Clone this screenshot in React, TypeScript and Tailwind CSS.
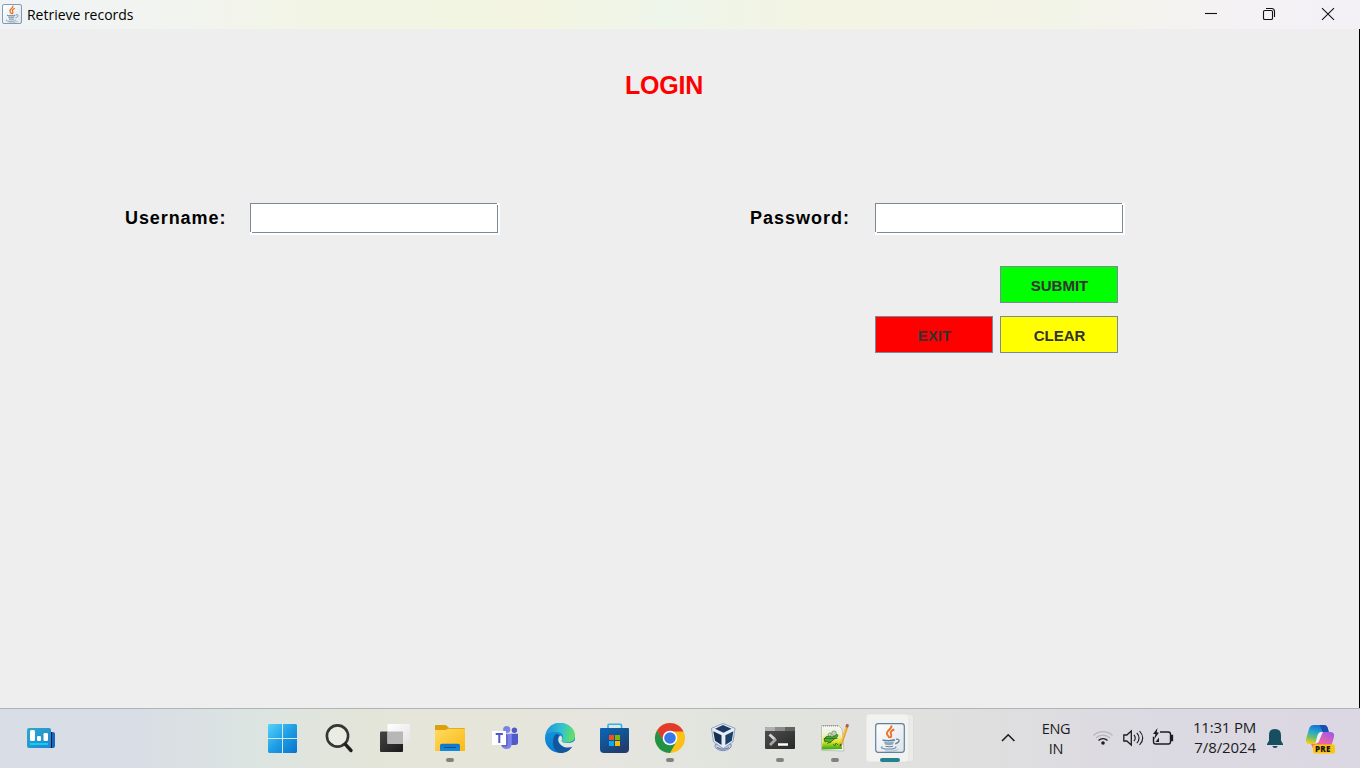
import React from "react";

function JavaCup({ className, viewBox = "875 723 30 30" }: { className?: string; viewBox?: string }) {
  return (
    <svg className={className} viewBox={viewBox}>
      <defs>
        <linearGradient id="cupBox" x1="0" y1="0" x2="1" y2="1">
          <stop offset="0" stopColor="#ffffff" />
          <stop offset="1" stopColor="#dfe3e8" />
        </linearGradient>
      </defs>
      <rect x="875.7" y="723.7" width="28.6" height="28.6" rx="2.5" fill="url(#cupBox)" stroke="#5d819f" strokeWidth="1.2" />
      <path d="M891.3 725.500c1.200 3.500-4.800 4.500-4.500 8 .2 1.800 2 2.500 2.500 4.500M894.300 729.500c-3 1.200-4.500 2.700-3.300 4.500.8 1.400.5 2.500-.7 4" fill="none" stroke="#ec7024" strokeWidth="1.900" />
      <path d="M882.500 739.800c2 1.200 10 1.200 12.500 0" fill="none" stroke="#5d819f" strokeWidth="1.500" />
      <path d="M884 741.500c2 1 7.500 1 10 0l-1 3q-4 1.300-8 0z" fill="#8ea7bb" />
      <path d="M896 739.200c4.500-.8 4 3.300-.8 4.600" fill="none" stroke="#5d819f" strokeWidth="1.200" />
      <path d="M885.500 746.300q3.500 1 7.500 0" fill="none" stroke="#5d819f" strokeWidth="1" />
      <path d="M882.500 746.500c-3.500 1.500 1 2.600 6 2.600 5.500 0 8.500-1.200 7-2.600" fill="none" stroke="#7d9ab2" strokeWidth="1.200" />
      <path d="M885 750.800c5 .7 11 .3 13.500-1.800" fill="none" stroke="#92aabd" strokeWidth=".8" />
    </svg>
  );
}

function Slot({ x, children }: { x: number; children: React.ReactNode }) {
  return (
    <svg className="h-[59px] w-[55px] shrink-0" viewBox={`${x} 709 55 59`}>
      {children}
    </svg>
  );
}

function RunningDot({ x }: { x: number }) {
  return <rect x={x - 4} y="758" width="8" height="4" rx="2" fill="#82827f" />;
}

function TaskIcons() {
  return (
    <div className="flex">
      <Slot x={258}>
        <defs>
          <linearGradient id="win" gradientUnits="userSpaceOnUse" x1="268" y1="724" x2="297" y2="753">
            <stop offset="0" stopColor="#55d3fb" />
            <stop offset=".5" stopColor="#1e9ee5" />
            <stop offset="1" stopColor="#0873cf" />
          </linearGradient>
        </defs>
        <path d="M269 724h13v14h-14v-13zM283 724h13l1 1v13h-14zM268 739h14v14h-13l-1-1zM283 739h14v13l-1 1h-13z" fill="url(#win)" />
      </Slot>
      <Slot x={313}>
        <circle cx="337.500" cy="736" r="10.600" fill="#f4f5ef" fillOpacity=".45" stroke="#343434" strokeWidth="2.600" />
        <path d="M345.200 744.200l5.800 6.300" stroke="#202020" strokeWidth="3.400" strokeLinecap="round" />
      </Slot>
      <Slot x={368}>
        <defs>
          <linearGradient id="tvDark" x1="0" y1="0" x2="1" y2="1">
            <stop offset="0" stopColor="#454545" />
            <stop offset="1" stopColor="#1a1a1a" />
          </linearGradient>
          <linearGradient id="tvLight" x1="0" y1="0" x2="1" y2="1">
            <stop offset="0" stopColor="#ffffff" />
            <stop offset="1" stopColor="#e3e3e3" />
          </linearGradient>
        </defs>
        <rect x="380" y="731.500" width="23" height="20.500" rx="1" fill="url(#tvDark)" />
        <rect x="387.500" y="724" width="22.500" height="20" rx="1" fill="url(#tvLight)" />
        <path d="M387.500 731.500H403V744h-15.500z" fill="#b7b7b7" />
      </Slot>
      <Slot x={423}>
        <defs>
          <linearGradient id="folder" x1="0" y1="0" x2="1" y2="1">
            <stop offset="0" stopColor="#ffda61" />
            <stop offset="1" stopColor="#fbb914" />
          </linearGradient>
          <linearGradient id="tray" x1="0" y1="0" x2="0" y2="1">
            <stop offset="0" stopColor="#1274c5" />
            <stop offset="1" stopColor="#148be0" />
          </linearGradient>
        </defs>
        <path d="M435 726q0-1 1-1h9q1 0 2 1l2 2h15q1 0 1 1v6h-30z" fill="#dda00d" />
        <path d="M435 730h10.500l2.500-1.200h17V751h-30z" fill="url(#folder)" />
        <path d="M440 751v-5.500q0-1.800 1.800-1.800h16.400q1.800 0 1.800 1.800v5.500z" fill="url(#tray)" />
        <path d="M444 747.500h12" stroke="#0b4f91" />
        <RunningDot x={450} />
      </Slot>
      <Slot x={478}>
        <circle cx="514.400" cy="730.300" r="2.700" fill="#5059c9" />
        <path d="M511 733.800h7v8.700q0 2.500-3 2.500h-4z" fill="#5059c9" />
        <circle cx="506.700" cy="729.500" r="3.600" fill="#7b83eb" />
        <path d="M502 733.800h9.800V743q0 6-5.500 6-4 0-5-4z" fill="#7b83eb" />
        <path d="M506 734.500l1 .8v10.500h-5.500" fill="none" stroke="#454b99" strokeWidth=".8" />
        <rect x="492" y="731" width="14" height="14" fill="#fff" />
        <path d="M495.700 734h7.200M499.300 734v9" stroke="#5059c9" strokeWidth="2" />
      </Slot>
      <Slot x={533}>
        <defs>
          <linearGradient id="edgeTop" gradientUnits="userSpaceOnUse" x1="548" y1="732" x2="574" y2="737">
            <stop offset="0" stopColor="#239bdd" />
            <stop offset=".5" stopColor="#31c4ce" />
            <stop offset="1" stopColor="#67e15d" />
          </linearGradient>
          <linearGradient id="edgeLeft" gradientUnits="userSpaceOnUse" x1="555" y1="731" x2="557" y2="753">
            <stop offset="0" stopColor="#1493d6" />
            <stop offset="1" stopColor="#0878d4" />
          </linearGradient>
        </defs>
        <circle cx="560" cy="738" r="15" fill="url(#edgeLeft)" />
        <path d="M545.500 734.500C548 726 553 723 560 723c9 0 15 6 15 12.500 0 5-4 7-8 7-4.500 0-6-1.500-5.200-2.500 2.700-3.500.2-8-5-8-4.500-.8-9 1-11.300 2.500z" fill="url(#edgeTop)" />
        <path d="M556 734c-4.500 4-4.500 17.700 4.500 19 5.500 0 9.500-2.500 12-7-7 3-13.500 0-14.500-5-.5-2 0-4 1.500-5.500-1-1-2-1.800-3.500-1.500z" fill="#11569f" />
        <path d="M560.500 735.500c-3 2-3 6.300.3 9.300 3.500 3.400 8.500 3.500 12.700 1.400l3-5.200v-2.500q-3.500 5-9.500 4.500c-4.500-.2-6-1.500-5.200-3 .8-1.500.5-3.500-1.300-4.500z" fill="#e6e6de" />
      </Slot>
      <Slot x={588}>
        <defs>
          <linearGradient id="store" x1="0" y1="0" x2=".6" y2="1">
            <stop offset="0" stopColor="#0869b9" />
            <stop offset="1" stopColor="#213c6d" />
          </linearGradient>
        </defs>
        <path d="M608 729v-3.700q0-1 1-1h11.500q1 0 1 1v3.700" fill="none" stroke="#26b6ed" strokeWidth="1.600" />
        <path d="M600 729q0-1 1-1h27q1 0 1 1v20q0 4-4 4h-21q-4 0-4-4z" fill="url(#store)" />
        <path d="M609 735h5v5h-5z" fill="#f25022" />
        <path d="M615 735h5v5h-5z" fill="#7fba00" />
        <path d="M609 741h5v5h-5z" fill="#0bacee" />
        <path d="M615 741h5v5h-5z" fill="#ffb900" />
      </Slot>
      <Slot x={643}>
        <circle cx="670" cy="738" r="15" fill="#fbc116" />
        <path d="M657 730.500a15 15 0 0 1 26 0l.2 1H670l-6.500 10z" fill="#e23b2e" />
        <path d="M657 730.500a15 15 0 0 0 13 22.500l6.500-11.500-12.500 0z" fill="#229344" />
        <circle cx="670" cy="738" r="7.300" fill="#fff" />
        <circle cx="670" cy="738" r="5.800" fill="#3478ea" />
        <RunningDot x={670} />
      </Slot>
      <Slot x={698}>
        <path d="M715.500 744q-2 3 1.500 5 6 3.500 12 0 3.500-2 2-5z" fill="#c3cbe0" stroke="#7484ab" strokeWidth=".8" />
        <path d="M717 747.500q6 3.500 12 0" fill="none" stroke="#485f91" strokeWidth=".8" />
        <path d="M723 723.500l12 4.800-2 13.500-9.700 6.700-9.800-6.700-2-13.500z" fill="#e5edf9" stroke="#5d76a5" strokeWidth=".6" />
        <path d="M723 725l8.500 3.700-8 4-8.500-4z" fill="#1d3a62" />
        <path d="M713.300 731.300l8.200 4v9.700l-6.500-4.300z" fill="#16304f" />
        <path d="M733.400 731.300l-8 4v9.700l6.400-4.300z" fill="#1d4069" />
      </Slot>
      <Slot x={753}>
        <defs>
          <linearGradient id="term" x1="0" y1="0" x2="1" y2="1">
            <stop offset="0" stopColor="#505050" />
            <stop offset="1" stopColor="#292929" />
          </linearGradient>
        </defs>
        <rect x="765" y="727" width="30" height="22" rx="1" fill="url(#term)" />
        <path d="M765 728q0-1 1-1h9v4h-10z" fill="#b0b0b0" />
        <path d="M775 727h10v4h-10z" fill="#8b8b8b" />
        <path d="M785 727h9q1 0 1 1v3h-10z" fill="#636363" />
        <path d="M769.500 734.500l5.500 5" stroke="#d7d7d7" strokeWidth="2.800" />
        <path d="M776 739l-6 6" stroke="#a6a6a6" strokeWidth="2.800" />
        <path d="M778 744.500h10" stroke="#fff" strokeWidth="2.500" />
        <RunningDot x={780} />
      </Slot>
      <Slot x={808}>
        <defs>
          <linearGradient id="note" x1="0" y1="0" x2="0" y2="1">
            <stop offset=".2" stopColor="#eef3e2" />
            <stop offset=".62" stopColor="#dfe821" />
            <stop offset="1" stopColor="#29a519" />
          </linearGradient>
        </defs>
        <path d="M821.500 725.500h17l3.500 3.500 2 22-22.500-.7z" fill="#f5f5f2" stroke="#aab09d" strokeWidth=".7" />
        <path d="M823 729h18l1 20-20 .5z" fill="url(#note)" />
        <path d="M823 725.800h15" stroke="#8b8b86" strokeWidth="1.200" strokeDasharray="1 1" />
        <path d="M824 739c3-4 5-3 8-2l3-1c2-3 4-1 2 1l-4 3c-2 3-5 3-6 1l-2 1z" fill="#45b52f" stroke="#24451d" strokeWidth=".7" />
        <circle cx="829.800" cy="734.500" r="1.600" fill="#c9dfbe" stroke="#5c7a53" strokeWidth=".6" />
        <circle cx="834" cy="733.300" r="2.400" fill="#bdd4b5" stroke="#5c7a53" strokeWidth=".6" />
        <path d="M824.500 738.500h13M827 743.500l4-1.500M833 744l2 2 1-3 2 2" fill="none" stroke="#315029" strokeWidth=".7" />
        <path d="M841 744.500l6.300-19" stroke="#e4a32b" strokeWidth="2.600" />
        <path d="M840.800 743l6-18" stroke="#fae07a" strokeWidth=".7" />
        <path d="M846.700 727.300l1-3" stroke="#b65455" strokeWidth="2.700" />
        <path d="M839.800 743.800l-.2 3.200 2.500-2.200z" fill="#4c4a39" />
        <RunningDot x={835} />
      </Slot>
      <div className="relative h-[59px] w-[55px] shrink-0">
        <svg className="h-[59px] w-[55px]" viewBox="863 709 55 59">
          <rect x="868" y="714" width="45.500" height="48" rx="3.500" fill="#ebebe9" stroke="#dcdcd9" />
          <rect x="866" y="714" width="43" height="48" rx="3.500" fill="#f2f2f1" stroke="#dfdfdd" strokeWidth=".7" />
          <rect x="880" y="758" width="20" height="4" rx="2" fill="#26808f" />
        </svg>
        <JavaCup className="absolute left-3 top-3.5 size-[30px]" />
      </div>
    </div>
  );
}

function Field({ label, type, spacing }: { label: string; type: string; spacing: string }) {
  return (
    <label className="flex h-8 w-[375px] items-start">
      <span className={`w-[125px] whitespace-nowrap pt-[5px] text-[18px] leading-5 font-bold text-black ${spacing}`}>{label}</span>
      <span className="relative flex h-8 w-[250px] bg-white">
        <input type={type} className="h-[30px] w-[248px] border border-[#7a8a99] bg-white px-1 text-base outline-none" />
        <span className="absolute right-[2px] top-0 h-[2px] w-px bg-white" />
        <span className="absolute bottom-[2px] left-0 h-px w-[2px] bg-white" />
      </span>
    </label>
  );
}

function ActionButton({ children, color }: { children: string; color: string }) {
  return (
    <button className={`h-[37px] w-[118px] border border-[#7a8a99] pt-[2px] pl-px text-[15px] leading-5 font-bold text-[#333333] ${color}`}>
      {children}
    </button>
  );
}

function Tray() {
  return (
    <div className="flex text-[#1c1c20]">
      <svg className="h-[59px] w-10" viewBox="1000 709 40 59">
        <path d="M1002 741l6.200-6.200 6.200 6.200" fill="none" stroke="#1c1c20" strokeWidth="1.600" />
      </svg>
      <div className="w-8 pt-[10px] text-center font-['Open_Sans',sans-serif] text-[14.500px] leading-5 tracking-[-0.35px]">
        <div>ENG</div>
        <div>IN</div>
      </div>
      <svg className="h-[59px] w-[108px]" viewBox="1072 709 108 59" fill="none" stroke="#1c1c20" strokeWidth="1.300">
        <path d="M1093.500 735.500a13.500 13.500 0 0 1 19 0M1096 738a9.900 9.900 0 0 1 14 0" stroke="#b8b6bb" />
        <path d="M1098.500 740.500a6.400 6.400 0 0 1 9 0" />
        <circle cx="1103" cy="743" r="1.800" fill="#1c1c20" stroke="none" />
        <path d="M1123.800 735h3l4.500-4v14l-4.500-4h-3z" />
        <path d="M1134 734.800q2.500 3.200 0 6.400M1136.800 732.800q4.500 5.200 0 10.400M1139.500 731q6.500 7 0 14" strokeWidth="1.100" />
        <path d="M1160 732h8.300q2.200 0 2.200 2.200v7.600q0 2.200-2.200 2.200h-12.600q-2.200 0-2.200-2.200v-5" strokeWidth="1.400" />
        <path d="M1171 735.500h1.500v5h-1.500z" fill="#1c1c20" />
        <path d="M1157.500 728l-4.500 6h2.500l-1.500 5.500 5-7h-2.300z" fill="#1c1c20" stroke="none" />
        <path d="M1155.500 742l3.500-4.500v4.500z" fill="#1c1c20" stroke="none" />
      </svg>
      <div className="w-[76px] pt-[8px] text-right font-['Open_Sans',sans-serif] text-[15px] leading-5 tracking-[-0.2px]">
        <div>11:31 PM</div>
        <div className="tracking-[-0.1px]">7/8/2024</div>
      </div>
      <svg className="h-[59px] w-10" viewBox="1256 709 40 59">
        <path d="M1269 735q0-6 6-6t6 6v5.500l2 3.500v1h-16v-1l2-3.500zM1272.300 746h5.400q-.5 2-2.700 2t-2.700-2z" fill="#174f60" />
      </svg>
      <div className="relative h-[59px] w-16">
        <svg className="h-[59px] w-16" viewBox="1296 709 64 59">
          <defs>
            <linearGradient id="copLeft" x1=".6" y1="0" x2=".3" y2="1">
              <stop offset=".1" stopColor="#1977d2" />
              <stop offset=".4" stopColor="#24a8d1" />
              <stop offset=".7" stopColor="#6fbf68" />
              <stop offset="1" stopColor="#f1cf17" />
            </linearGradient>
            <linearGradient id="copRight" x1=".7" y1="0" x2=".2" y2="1">
              <stop offset="0" stopColor="#a55ae3" />
              <stop offset=".5" stopColor="#e764ae" />
              <stop offset="1" stopColor="#ff774c" />
            </linearGradient>
          </defs>
          <path d="M1314 725h10q3 0 4 4l1 4h-6q-3 0-4 3l-2 6q-1 2-4 2h-3q-5 0-4-5l3-10q1-4 5-4z" fill="url(#copLeft)" />
          <path d="M1319 725h5q3 0 4 4l1 4h-6l-2-5q-1-3-2-3z" fill="#184fb2" />
          <path d="M1323 732h7q5 0 4 5l-3 10q-1 3-5 3h-10q-3 0-4-4l-1-2q3 0 5-1 2-1 3-4l2-4q1-2 2-3z" fill="url(#copRight)" />
          <path d="M1323 732h-2q-2.500 0-3.500 3.500l-2 7.500h-2.500q5 2 6.500-3l2-5z" fill="#f3eef4" />
          <rect x="1313" y="744.500" width="22" height="9" rx="2" fill="#fdc60e" />
        </svg>
        <span className="absolute left-[19px] top-[34.500px] font-['Open_Sans',sans-serif] text-[8px] leading-[10px] font-extrabold tracking-[0.25px] text-[#171717]">PRE</span>
      </div>
    </div>
  );
}

export default function App() {
  return (
    <div className="flex h-[768px] w-[1360px] flex-col overflow-hidden bg-[#eeeeee] font-['Liberation_Sans',sans-serif]">
      <header className="flex h-[29px] justify-between bg-[linear-gradient(90deg,#eff3f5_0%,#f2f4ef_14%,#f2f5e4_24%,#f3f5e2_40%,#eef5ea_49%,#f3f4e3_60%,#f3f4e8_78%,#f4f2f3_89%,#f3f1f6_100%)]">
        <div className="flex pl-[2px]">
          <JavaCup className="mt-1 size-5" />
          <h1 className="ml-[5px] pt-[5px] font-['Open_Sans',sans-serif] text-[14px] leading-5 tracking-[-0.02px] text-black">Retrieve records</h1>
        </div>
        <svg className="h-[29px] w-[180px]" viewBox="1180 0 180 29" fill="none" stroke="#111" strokeWidth="1.100">
          <path d="M1205 13.500h12" />
          <rect x="1263.500" y="10.500" width="9" height="9" rx="1.300" />
          <path d="M1266 8.500h5.500q3 0 3 3v5.500" />
          <path d="M1322 8.200l12 11.600M1334 8.200l-12 11.600" />
        </svg>
      </header>
      <main className="h-[679px] border-r border-black bg-[#eeeeee]">
        <h2 className="pt-[41px] pl-[625px] text-[25px] leading-[30px] font-bold tracking-[-0.2px] text-[#ff0000]">LOGIN</h2>
        <div className="mt-[103px] flex gap-[250px] pl-[125px]">
          <Field label="Username:" type="text" spacing="tracking-[0.92px]" />
          <Field label="Password:" type="password" spacing="tracking-[1px]" />
        </div>
        <div className="mt-[31px] ml-[875px] grid w-[243px] grid-cols-2 gap-x-[7px] gap-y-[13px]">
          <div className="col-start-2">
            <ActionButton color="bg-[#00ff00]">SUBMIT</ActionButton>
          </div>
          <ActionButton color="bg-[#ff0000]">EXIT</ActionButton>
          <ActionButton color="bg-[#ffff00]">CLEAR</ActionButton>
        </div>
      </main>
      <footer className="flex h-[60px] justify-between border-t border-[#b0b4b6] bg-[linear-gradient(90deg,#d9dde6_0%,#d9dde5_10%,#dce4e1_19%,#e4e5d9_27%,#e6e5d9_36%,#e6e5df_44%,#e1e4de_55%,#e1e1df_66%,#dfdedf_74%,#dbd9e2_85%,#dcd8e3_100%)]">
        <svg className="h-[59px] w-[258px]" viewBox="0 709 258 59">
          <defs>
            <linearGradient id="widget" x1="0" y1="0" x2="1" y2="1">
              <stop offset="0" stopColor="#2aacc7" />
              <stop offset="1" stopColor="#2582d9" />
            </linearGradient>
          </defs>
          <rect x="47" y="732" width="8" height="16" rx="2" fill="#1768b9" />
          <path d="M51 732h1v16h-1z" fill="#071d41" />
          <rect x="27" y="728" width="24" height="20" rx="2" fill="url(#widget)" />
          <rect x="30" y="730" width="5" height="11" rx="1.500" fill="#fff" />
          <rect x="37" y="736" width="4" height="5" rx="1.200" fill="#fff" />
          <rect x="43.500" y="733" width="4.500" height="8" rx="1.200" fill="#fff" />
          <path d="M30 743h18v2H30z" fill="#05d3f5" />
        </svg>
        <TaskIcons />
        <div className="flex flex-1 justify-end">
          <Tray />
        </div>
      </footer>
    </div>
  );
}
